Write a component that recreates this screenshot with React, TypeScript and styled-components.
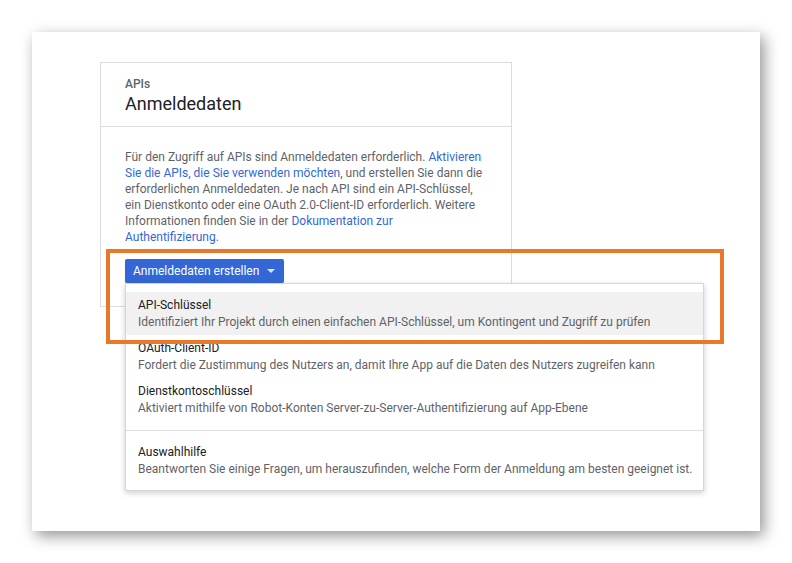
import styled, { createGlobalStyle } from "styled-components";

const GlobalStyle = createGlobalStyle`
  body {
    margin: 0;
    background: #ffffff;
    font-family: Roboto, "Liberation Sans", Arial, sans-serif;
  }
`;

const Page = styled.div`
  width: 792px;
  height: 563px;
  padding: 32px;
  box-sizing: border-box;
`;

const Shot = styled.div`
  position: relative;
  width: 728px;
  height: 499px;
  box-sizing: border-box;
  padding: 30px 0 0 68px;
  background: #fff;
  box-shadow: 4px 5px 14px rgba(0, 0, 0, 0.42);
`;

const Card = styled.div`
  width: 412px;
  border: 1px solid #dadce0;
  box-sizing: border-box;
  background: #fff;
`;

const CardHeader = styled.div`
  padding: 13px 24px 10px;
  border-bottom: 1px solid #dadce0;
`;

const Eyebrow = styled.div`
  font-size: 12px;
  line-height: 16px;
  font-weight: 500;
  color: #5f6368;
`;

const Title = styled.div`
  font-size: 18px;
  line-height: 24px;
  color: #202124;
`;

const CardBody = styled.div`
  padding: 22px 24px 23px;
`;

const Intro = styled.p`
  margin: 0 0 14px;
  font-size: 12px;
  line-height: 16px;
  color: #5f6368;
`;

const Link = styled.a`
  color: #3367d6;
  text-decoration: none;
`;

const DropdownWrap = styled.div`
  position: relative;
  display: inline-block;
  vertical-align: top;
`;

const Button = styled.button`
  display: flex;
  align-items: center;
  gap: 8px;
  height: 24px;
  padding: 0 9px 0 8px;
  border: none;
  border-radius: 2px;
  background: #3367d6;
  color: #fff;
  font-family: inherit;
  font-size: 12px;
  box-shadow: 0 1px 1px rgba(0, 0, 0, 0.2);
`;

const Caret = styled.span`
  width: 0;
  height: 0;
  border-left: 4px solid transparent;
  border-right: 4px solid transparent;
  border-top: 4px solid #dfe6f7;
`;

const Menu = styled.div`
  position: absolute;
  top: 100%;
  left: 0;
  width: 579px;
  box-sizing: border-box;
  padding: 8px 0;
  background: #fff;
  border: 1px solid #d6d6d6;
  box-shadow: 0 2px 6px rgba(0, 0, 0, 0.2);
  z-index: 2;
`;

const MenuItem = styled.div<{ $active?: boolean }>`
  padding: 5px 12px;
  background: ${({ $active }) => ($active ? "#f1f1f1" : "transparent")};
  font-size: 12px;
  line-height: 16px;
  white-space: nowrap;
`;

const ItemTitle = styled.div`
  color: #202124;
  margin-bottom: 1px;
`;

const ItemText = styled.div`
  color: #5f6368;
`;

const Separator = styled.div`
  margin: 9px 0 8px;
  border-top: 1px solid #e0e0e0;
`;

const Highlight = styled.div`
  position: absolute;
  left: 74px;
  top: 217px;
  width: 618px;
  height: 95px;
  box-sizing: border-box;
  border: 4px solid #e8782a;
  z-index: 3;
`;

const items = [
  {
    title: "API-Schlüssel",
    text: "Identifiziert Ihr Projekt durch einen einfachen API-Schlüssel, um Kontingent und Zugriff zu prüfen",
    active: true,
  },
  {
    title: "OAuth-Client-ID",
    text: "Fordert die Zustimmung des Nutzers an, damit Ihre App auf die Daten des Nutzers zugreifen kann",
  },
  {
    title: "Dienstkontoschlüssel",
    text: "Aktiviert mithilfe von Robot-Konten Server-zu-Server-Authentifizierung auf App-Ebene",
  },
];

const App = () => (
  <>
    <GlobalStyle />
    <Page>
      <Shot>
        <Card>
          <CardHeader>
            <Eyebrow>APIs</Eyebrow>
            <Title>Anmeldedaten</Title>
          </CardHeader>
          <CardBody>
            <Intro>
              Für den Zugriff auf APIs sind Anmeldedaten erforderlich.{" "}
              <Link href="#">Aktivieren Sie die APIs, die Sie verwenden möchten</Link>, und
              erstellen Sie dann die erforderlichen Anmeldedaten. Je nach API sind ein
              API-Schlüssel, ein Dienstkonto oder eine OAuth 2.0-Client-ID erforderlich.
              Weitere Informationen finden Sie in der{" "}
              <Link href="#">Dokumentation zur Authentifizierung</Link>.
            </Intro>
            <DropdownWrap>
              <Button>
                Anmeldedaten erstellen
                <Caret />
              </Button>
              <Menu>
                {items.map(item => (
                  <MenuItem key={item.title} $active={item.active}>
                    <ItemTitle>{item.title}</ItemTitle>
                    <ItemText>{item.text}</ItemText>
                  </MenuItem>
                ))}
                <Separator />
                <MenuItem>
                  <ItemTitle>Auswahlhilfe</ItemTitle>
                  <ItemText>
                    Beantworten Sie einige Fragen, um herauszufinden, welche Form der
                    Anmeldung am besten geeignet ist.
                  </ItemText>
                </MenuItem>
              </Menu>
            </DropdownWrap>
          </CardBody>
        </Card>
        <Highlight />
      </Shot>
    </Page>
  </>
);

export default App;
